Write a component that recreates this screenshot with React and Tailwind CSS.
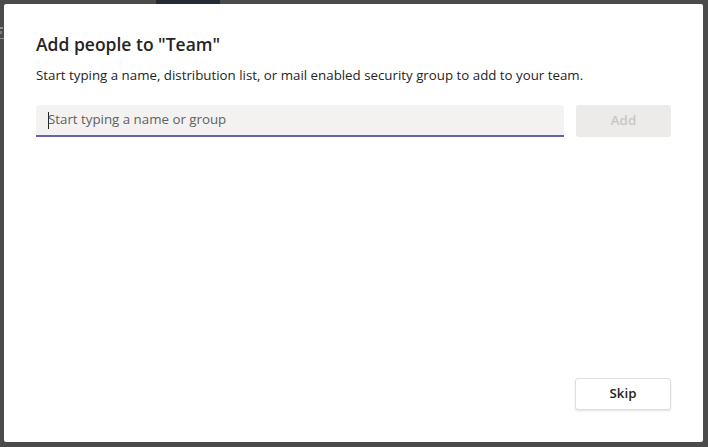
export default function App() {
  return (
    <div className="w-[708px] h-[447px] bg-[#4b4b4b] flex flex-col overflow-hidden font-['Open_Sans',sans-serif]">
      <div className="h-[4px] flex shrink-0">
        <div className="w-[156px]" />
        <div className="w-[64px] bg-[#252a35]" />
      </div>
      <div className="flex flex-1 min-h-0 pb-[5px]">
        <div className="w-[4px] shrink-0 flex flex-col pt-[23px]">
          <div className="h-[2px] w-[3px] bg-[#8f8f8f]" />
          <div className="h-[3px] w-[2px] bg-[#7a7a7a] mt-[2px]" />
          <div className="h-px bg-[#8a8a8a] mt-[4px]" />
        </div>
        <div className="w-[699px] bg-white rounded-[2px] px-[32px] pt-[28px] pb-[32px] flex flex-col">
          <h2 className="text-[17.5px] leading-[24px] font-semibold text-[#252423]">
            Add people to "Team"
          </h2>
          <p className="mt-[10px] text-[13.3px] leading-[18px] text-[#252423]">
            Start typing a name, distribution list, or mail enabled security group to add to your team.
          </p>
          <div className="mt-[21px] flex gap-[12px]">
            <div className="w-[528px] shrink-0 h-[32px] bg-[#f3f2f1] rounded-t-[3px] border-b-2 border-[#6264a7] flex items-center px-[12px]">
              <span className="w-px h-[17px] bg-[#252423] mr-[-1px]" />
              <span className="text-[13.3px] text-[#616161]">Start typing a name or group</span>
            </div>
            <button className="w-[95px] shrink-0 h-[32px] bg-[#edebe9] rounded-[3px] text-[13.3px] font-semibold text-[#c8c6c4]">
              Add
            </button>
          </div>
          <div className="flex-1" />
          <div className="flex justify-end">
            <button className="w-[96px] h-[32px] bg-white border border-[#e1dfdd] rounded-[3px] shadow-[0_1px_2px_rgba(0,0,0,0.12)] text-[13.3px] font-semibold text-[#252423]">
              Skip
            </button>
          </div>
        </div>
      </div>
    </div>
  );
}
